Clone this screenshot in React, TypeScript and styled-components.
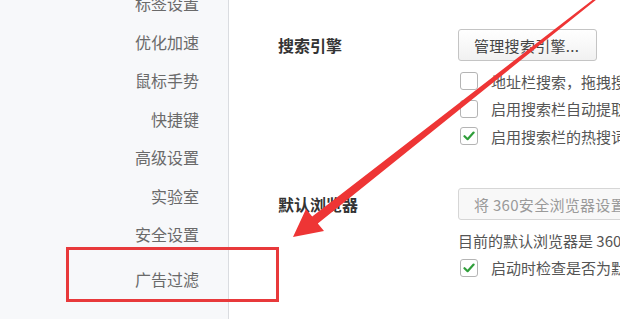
import styled, { createGlobalStyle } from 'styled-components';

const GlobalStyle = createGlobalStyle`
  html, body {
    margin: 0;
    padding: 0;
    background: #ffffff;
  }
  body {
    font-family: "Noto Sans CJK SC", "Noto Sans", sans-serif;
    overflow: hidden;
  }
`;

const Page = styled.div`
  position: relative;
  width: 620px;
  height: 326px;
  display: flex;
  align-items: flex-start;
  overflow: hidden;
  background: #ffffff;
`;

const Sidebar = styled.nav`
  width: 228px;
  height: 319px;
  flex-shrink: 0;
  background: #f7f8fa;
  border-right: 1px solid #dadce0;
  overflow: hidden;
`;

const NavList = styled.ul`
  list-style: none;
  margin: -16px 0 0;
  padding: 0 29px 0 0;
`;

const NavItem = styled.li<{ $gap?: number }>`
  height: 38.5px;
  line-height: 38.5px;
  margin-top: ${(p) => p.$gap ?? 0}px;
  text-align: right;
  font-size: 16px;
  color: #6a6a6a;
  white-space: nowrap;
`;

const Main = styled.main`
  flex: 1;
  min-width: 0;
  padding: 29px 0 0 49px;
  overflow: hidden;
`;

const Section = styled.section<{ $top?: number }>`
  display: grid;
  grid-template-columns: 180px 1fr;
  margin-top: ${(p) => p.$top ?? 0}px;
`;

const Label = styled.h3`
  margin: 0;
  height: 32px;
  line-height: 32px;
  font-size: 16px;
  font-weight: 700;
  color: #333333;
  white-space: nowrap;
`;

const Body = styled.div`
  min-width: 0;
  display: flex;
  flex-direction: column;
  align-items: flex-start;
`;

const Button = styled.button<{ $disabled?: boolean }>`
  height: 32px;
  padding: 0 17px 0 15px;
  box-sizing: border-box;
  border: 1px solid ${(p) => (p.$disabled ? '#d6d6d6' : '#c4c4c4')};
  border-radius: 3px;
  background: ${(p) =>
    p.$disabled ? '#f8f8f8' : 'linear-gradient(#ffffff, #f1f1f1)'};
  font-family: inherit;
  font-size: 15px;
  letter-spacing: 0.3px;
  color: ${(p) => (p.$disabled ? '#9a9a9a' : '#444444')};
  white-space: nowrap;
  flex-shrink: 0;
`;

const Rows = styled.div`
  margin-top: 6.5px;
  display: flex;
  flex-direction: column;
`;

const Row = styled.label`
  height: 27.5px;
  display: flex;
  align-items: center;
  gap: 13px;
  padding-left: 2px;
  font-size: 15px;
  color: #555555;
  white-space: nowrap;
`;

const Note = styled.div`
  height: 27.5px;
  line-height: 27.5px;
  font-size: 15px;
  color: #555555;
  white-space: nowrap;
`;

const Box = styled.span`
  width: 18px;
  height: 18px;
  box-sizing: border-box;
  flex-shrink: 0;
  border: 1px solid #b4b4b4;
  border-radius: 3px;
  background: #ffffff;
  display: flex;
  align-items: center;
  justify-content: center;
`;

const Highlight = styled.div`
  position: absolute;
  left: 66px;
  top: 247px;
  width: 213px;
  height: 55px;
  box-sizing: border-box;
  border: 3px solid #e8393b;
  pointer-events: none;
`;

const Overlay = styled.svg`
  position: absolute;
  left: 0;
  top: 0;
  width: 620px;
  height: 326px;
  pointer-events: none;
`;

function Check({ checked }: { checked?: boolean }) {
  return (
    <Box>
      {checked && (
        <svg width="12" height="10" viewBox="0 0 12 10">
          <path
            d="M1.5 5.2 L4.6 8.2 L10.6 1.6"
            fill="none"
            stroke="#2f9e3a"
            strokeWidth="2.2"
            strokeLinecap="round"
            strokeLinejoin="round"
          />
        </svg>
      )}
    </Box>
  );
}

const navItems = ['标签设置', '优化加速', '鼠标手势', '快捷键', '高级设置', '实验室', '安全设置'];

export default function App() {
  return (
    <>
      <GlobalStyle />
      <Page>
        <Sidebar>
          <NavList>
            {navItems.map((name) => (
              <NavItem key={name}>{name}</NavItem>
            ))}
            <NavItem $gap={6}>广告过滤</NavItem>
          </NavList>
        </Sidebar>
        <Main>
          <Section>
            <Label>搜索引擎</Label>
            <Body>
              <Button>管理搜索引擎...</Button>
              <Rows>
                <Row>
                  <Check />
                  地址栏搜索，拖拽搜索时，在新标签页打开
                </Row>
                <Row>
                  <Check />
                  启用搜索栏自动提取剪贴板内容
                </Row>
                <Row>
                  <Check checked />
                  启用搜索栏的热搜词推荐
                </Row>
              </Rows>
            </Body>
          </Section>
          <Section $top={38}>
            <Label>默认浏览器</Label>
            <Body>
              <Button $disabled>将 360安全浏览器设置为默认浏览器</Button>
              <Rows>
                <Note>目前的默认浏览器是 360安全浏览器</Note>
                <Row>
                  <Check checked />
                  启动时检查是否为默认浏览器
                </Row>
              </Rows>
            </Body>
          </Section>
        </Main>
        <Highlight />
        <Overlay viewBox="0 0 620 326">
          <polygon
            points="597.4,-3.8 312.2,216.5 306,209 293,237 324,231 317.8,223.5 598.6,-2.2"
            fill="#ee3535"
          />
        </Overlay>
      </Page>
    </>
  );
}
